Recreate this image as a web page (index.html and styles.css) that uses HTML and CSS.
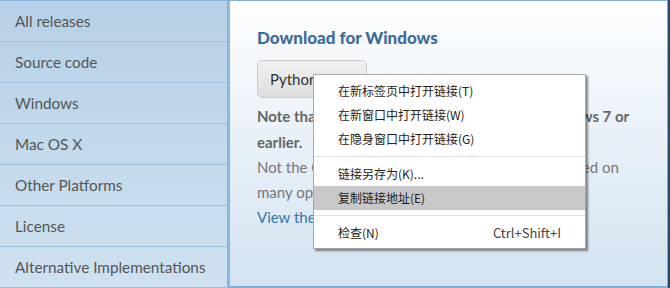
FILE: index.html
```
<!DOCTYPE html>
<html lang="en">

<head>
  <meta charset="UTF-8" />
  <title>Download Python</title>
  <link rel="stylesheet" href="styles.css">
</head>

<body>
  <div class="wrap">
    <!-- 左侧菜单 -->
    <ul class="side">
      <li><a href="javaScript:;">All releases</a></li>
      <li><a href="javaScript:;">Source code</a></li>
      <li><a href="javaScript:;">Windows</a></li>
      <li><a href="javaScript:;">Mac OS X</a></li>
      <li><a href="javaScript:;">Other Platforms</a></li>
      <li><a href="javaScript:;">License</a></li>
      <li><a href="javaScript:;">Alternative Implementations</a></li>
    </ul>
    <!-- 右侧下载区域 -->
    <div class="panel">
      <h4>Download for Windows</h4>
      <a href="javaScript:;" class="btn">Python 3.9.1</a>
      <p class="note">Note that Python 3.9+ cannot be used on Windows 7 or<br>earlier.</p>
      <p class="info">Not the OS you are looking for? Python can be used on<br>many operating systems and environments.<br><a href="javaScript:;">View the full list of downloads.</a></p>
    </div>
  </div>

  <!-- 右键菜单 -->
  <div class="ctx">
    <div class="item">在新标签页中打开链接(T)</div>
    <div class="item">在新窗口中打开链接(W)</div>
    <div class="item">在隐身窗口中打开链接(G)</div>
    <div class="sep"></div>
    <div class="item">链接另存为(K)...</div>
    <div class="item on">复制链接地址(E)</div>
    <div class="sep"></div>
    <div class="item"><span>检查(N)</span><span class="key">Ctrl+Shift+I</span></div>
  </div>
</body>

</html>
```

FILE: styles.css
```
* {
  margin: 0;
  padding: 0;
  box-sizing: border-box;
}

li,
ul {
  list-style: none;
}

a {
  text-decoration: none;
}

body {
  width: 670px;
  height: 288px;
  overflow: hidden;
  background: #2b4866;
  font-family: "Lato", "Liberation Sans", sans-serif;
}

.wrap {
  display: flex;
  width: 668px;
  height: 288px;
}

.side {
  width: 228px;
  border-top: 1px solid #8fb5d8;
  border-right: 1px solid #8fb3d5;
  background: linear-gradient(#b6d0e7, #cfe1f0);
}

.side li {
  height: 41px;
  border-bottom: 1px solid #9fc1df;
}

.side li a {
  display: block;
  padding-left: 15px;
  line-height: 40px;
  font-size: 15.3px;
  color: #555;
}

.panel {
  flex: 1;
  padding: 26px 0 0 27px;
  border: 1px solid #7fafd8;
  border-left: 2px solid #8cb8de;
  border-bottom-width: 2px;
  background: linear-gradient(#fdfeff, #d3e3f1);
}

.panel h4 {
  font-size: 17px;
  line-height: 22px;
  font-weight: 900;
  color: #3b6c99;
}

.btn {
  display: inline-block;
  margin-top: 11px;
  height: 38px;
  padding: 0 12px;
  border: 1px solid #cacaca;
  border-radius: 5px;
  background: linear-gradient(#f2f2f2, #dedede);
  line-height: 36px;
  font-size: 15px;
  color: #333;
}

.note {
  margin-top: 5px;
  font-size: 15px;
  line-height: 26px;
  font-weight: bold;
  color: #666;
  white-space: nowrap;
}

.info {
  font-size: 15px;
  line-height: 25px;
  color: #777;
  white-space: nowrap;
}

.info a {
  color: #3776ab;
}

.ctx {
  position: absolute;
  top: 74px;
  left: 313px;
  width: 273px;
  padding: 4px 0 3px;
  border: 1px solid #a9a9a9;
  background: #fff;
  box-shadow: 2px 2px 2px rgba(0, 0, 0, 0.45);
  font-family: "Noto Sans CJK SC", "Liberation Sans", sans-serif;
  font-size: 12px;
  color: #222;
}

.ctx .item {
  display: flex;
  justify-content: space-between;
  height: 24px;
  padding: 0 24px;
  line-height: 24px;
}

.ctx .on {
  background: #c8c8c8;
}

.ctx .key {
  font-size: 13px;
  color: #444;
}

.ctx .sep {
  height: 1px;
  margin: 5px 0;
  background: #e0e0e0;
}
```
